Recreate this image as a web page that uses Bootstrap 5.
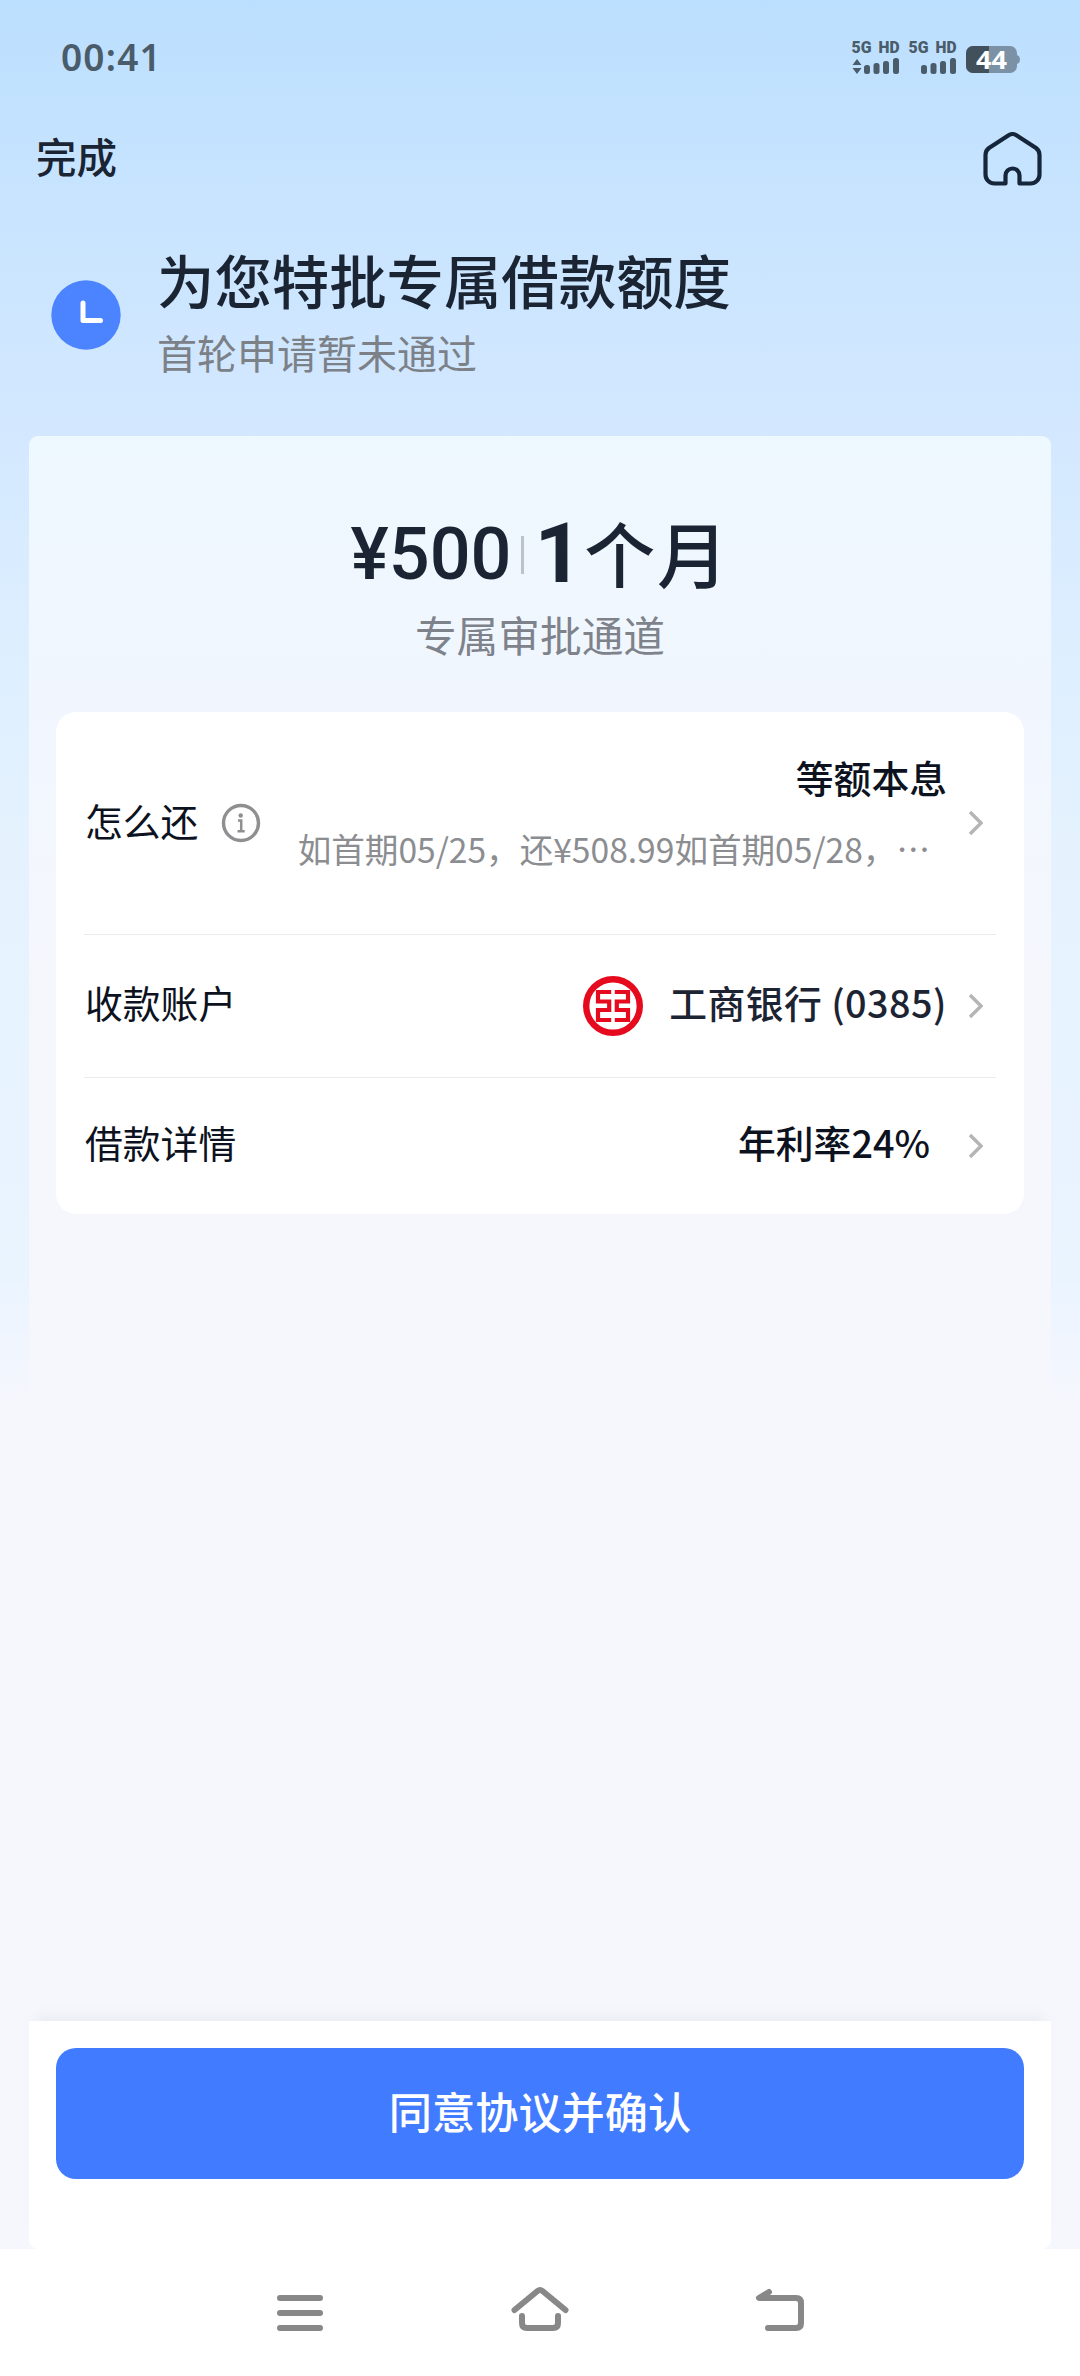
<!DOCTYPE html>
<html lang="zh-CN">
<head>
<meta charset="utf-8">
<meta name="viewport" content="width=device-width, initial-scale=1">
<title>借款确认</title>
<link href="https://cdn.jsdelivr.net/npm/bootstrap@5.3.0/dist/css/bootstrap.min.css" rel="stylesheet">
<style>
body{font-family:"Noto Sans CJK SC",sans-serif;color:#1a2433;background:#f5f7fc;min-height:2376px;line-height:1}
.screen{width:1080px;height:2376px;background:linear-gradient(#bbdffe 0,#c8e4ff 200px,#d3e8ff 430px,#dceeff 620px,#e5f2fe 850px,#eaf4ff 1280px,#f0f5fe 1340px,#f5f7fc 1410px);white-space:nowrap}
.statusbar{height:116px;padding:0 60px 0 61px;color:#4a5c69}
.clock{font:600 37px/1 "Noto Sans",sans-serif;letter-spacing:1.2px;padding-bottom:3px}
.topbar{height:84px;padding:0 38px 0 36px}
.topbar-title{font-size:40.5px;font-weight:500;padding-bottom:4px}
.hero{height:236px;padding-left:51px}
.hero-icon{margin-top:80px}
.hero-text{margin:43px 0 0 36px}
.hero h1{font-size:57.4px;font-weight:500;margin:0;line-height:72px}
.hero-sub{font-size:40px;line-height:56px;color:#7c8087;margin-top:9px}
.panel{margin:0 29px;height:1585px;border-radius:9px 9px 0 0;background:linear-gradient(#eef8ff 0,#f1f6fe 260px,#f5f7fc 600px)}
.quote{height:276px;padding-top:60px}
.amount{height:106px}
.money{font:500 72px/1 Roboto,sans-serif;padding-top:12px}
.rule{width:3px;height:38px;background:#bcc2cb;margin:12px 11px 0 9px}
.term{font-size:71px;font-weight:500;padding-top:9px;letter-spacing:1.6px}
.term b{font:700 84px/1 Roboto,sans-serif}
.channel{font-size:41.7px;line-height:60px;color:#7e828b;margin-top:2px}
.terms{border-radius:20px;background:#fff;margin:0 27px;height:502px;color:#0c1220;font-size:37.8px}
.terms .line{padding:0 41px 0 29px}
.line-plan{height:222px}
.line-bank{height:143px}
.line-rate{height:137px}
.line + .line{background:linear-gradient(#ebebee,#ebebee) 28px 0/912px 1px no-repeat}
.lift{padding-bottom:7px}
.inset-end{margin-right:17px}
.plan-text{line-height:72px;padding-bottom:20px}
.plan-note{font-size:33.6px;color:#8b8d91}
.info{margin-left:23px}
.chev{margin-left:21px}
.bank{color:#1c2433;margin-left:26px;letter-spacing:.45px}
.cta-bar{margin:0 29px;height:228px;background:#fff;border-radius:0 0 9px 9px;padding:27px 27px 0;box-shadow:0 -12px 14px -6px rgba(0,0,0,.045)}
.cta,.cta:hover{height:131px;border-radius:20px;background:#417bff;border:0;color:#fff;font-size:43.2px;font-weight:500;padding:0 0 6px}
.sysnav{height:127px;background:#fff}
</style>
</head>
<body>
<main class="screen d-flex flex-column">
  <div class="statusbar d-flex justify-content-between align-items-center">
    <span class="clock">00:41</span>
    <svg width="170" height="40" viewBox="850 38 170 40" fill="#4a5c69">
      <g font-family="Roboto" font-weight="900" font-size="16.5"><text x="851.5" y="53" textLength="20" lengthAdjust="spacingAndGlyphs">5G</text><text x="878.5" y="53" textLength="21" lengthAdjust="spacingAndGlyphs">HD</text><text x="908.5" y="53" textLength="20" lengthAdjust="spacingAndGlyphs">5G</text><text x="935.5" y="53" textLength="21" lengthAdjust="spacingAndGlyphs">HD</text></g>
      <path d="M857 59l4.500 6h-9zM857 74l4.500-6h-9z"/>
      <g><rect x="864" y="65" width="6" height="9" rx="2.500"/><rect x="873.500" y="63" width="6" height="11" rx="2.500"/><rect x="883" y="61" width="6" height="13" rx="2.500"/><rect x="893" y="58" width="6" height="16" rx="2.500"/></g>
      <g><rect x="921" y="65" width="6" height="9" rx="2.500"/><rect x="930.500" y="63" width="6" height="11" rx="2.500"/><rect x="940" y="61" width="6" height="13" rx="2.500"/><rect x="950" y="58" width="6" height="16" rx="2.500"/></g>
      <rect x="966" y="46" width="51" height="27" rx="7" fill="#7b91a6"/><path d="M973 46h16v27h-16a7 7 0 0 1-7-7V53a7 7 0 0 1 7-7z" fill="#42505c"/><path d="M1017 55q3 1 3 4.500t-3 4.500z" fill="#7b91a6"/>
      <text x="976" y="69" font-family="Noto Sans" font-weight="700" font-size="25" fill="#fff" textLength="31" lengthAdjust="spacingAndGlyphs">44</text>
    </svg>
  </div>
  <div class="topbar d-flex justify-content-between align-items-center">
    <span class="topbar-title">完成</span>
    <svg width="60" height="56" viewBox="980 130 60 56" fill="none" stroke="#16263a" stroke-width="4.200" stroke-linejoin="round"><path d="M1003.500 183.500H992.500a9 9 0 0 1-9-9V155q0-4.500 3.500-7l20-13q3.500-2 7 0l20 13q3.500 2.500 3.500 7v19.500a9 9 0 0 1-9 9H1017.500V175.500a7 7 0 0 0-14 0z"/></svg>
  </div>
  <header class="hero d-flex">
    <svg class="hero-icon flex-shrink-0" width="70" height="70" viewBox="0 0 70 70"><circle cx="35" cy="35" r="34.700" fill="#4c83ff"/><path d="M32 23v17.500h17.500" fill="none" stroke="#fff" stroke-width="5" stroke-linecap="round" stroke-linejoin="round"/></svg>
    <div class="hero-text d-flex flex-column">
      <h1>为您特批专属借款额度</h1>
      <span class="hero-sub">首轮申请暂未通过</span>
    </div>
  </header>
  <section class="panel">
    <div class="quote d-flex flex-column align-items-center">
      <div class="amount d-flex align-items-center">
        <span class="money">¥500</span><span class="rule"></span><span class="term d-flex align-items-baseline"><b>1</b>个月</span>
      </div>
      <span class="channel">专属审批通道</span>
    </div>
    <div class="terms d-flex flex-column">
      <div class="line line-plan d-flex align-items-center">
        <span class="lift">怎么还</span>
        <svg class="info" width="40" height="40" viewBox="0 0 40 40" fill="none" stroke="#8f8f92" stroke-width="3.400"><circle cx="20" cy="20" r="17.500"/><path d="M17 17.500h3.200V28M16.500 28.300h7.200" stroke-width="2.500"/><circle cx="19.700" cy="12.500" r="2.200" fill="#8f8f92" stroke="none"/></svg>
        <div class="plan-text ms-auto d-flex flex-column align-items-end">
          <span class="fw-medium">等额本息</span><span class="plan-note inset-end">如首期05/25，还¥508.99如首期05/28，⋯</span>
        </div>
        <svg class="chev" width="15" height="26" viewBox="0 0 15 26" fill="none" stroke="#b5b5b8" stroke-width="3.400"><path d="M2 2l11 11L2 24"/></svg>
      </div>
      <div class="line line-bank d-flex align-items-center">
        <span class="lift">收款账户</span>
        <svg class="ms-auto" width="60" height="60" viewBox="0 0 60 60" fill="none" stroke="#e60a1f"><circle cx="30" cy="30" r="26.800" stroke-width="6.400"/><path stroke-width="4.200" d="M28.200 16H15v9.500h11.200v8.500H15V44h13.200M31.800 16H45v9.500H33.800v8.500H45V44H31.800"/></svg>
        <span class="bank fw-medium lift">工商银行 (0385)</span>
        <svg class="chev" width="15" height="26" viewBox="0 0 15 26" fill="none" stroke="#b5b5b8" stroke-width="3.400"><path d="M2 2l11 11L2 24"/></svg>
      </div>
      <div class="line line-rate d-flex align-items-center">
        <span class="lift">借款详情</span>
        <span class="ms-auto inset-end fw-medium lift">年利率24%</span>
        <svg class="chev" width="15" height="26" viewBox="0 0 15 26" fill="none" stroke="#b5b5b8" stroke-width="3.400"><path d="M2 2l11 11L2 24"/></svg>
      </div>
    </div>
  </section>
  <section class="cta-bar"><button type="button" class="btn cta w-100">同意协议并确认</button></section>
  <nav class="sysnav">
    <svg class="d-block" width="1080" height="127" viewBox="0 2249 1080 127" fill="none" stroke="#888" stroke-width="6" stroke-linecap="round" stroke-linejoin="round">
      <path d="M280 2298h40M280 2313h40M280 2328h40"/>
      <path d="M514.500 2310l23-19q2.500-2 5 0l23 19M522 2316v7q0 5 5 5h26q5 0 5-5v-7"/>
      <path d="M769 2292l-10 6h37q5 0 5 5v20q0 5-5 5h-28"/>
    </svg>
  </nav>
</main>
<script src="https://cdn.jsdelivr.net/npm/bootstrap@5.3.0/dist/js/bootstrap.bundle.min.js"></script>
</body>
</html>
